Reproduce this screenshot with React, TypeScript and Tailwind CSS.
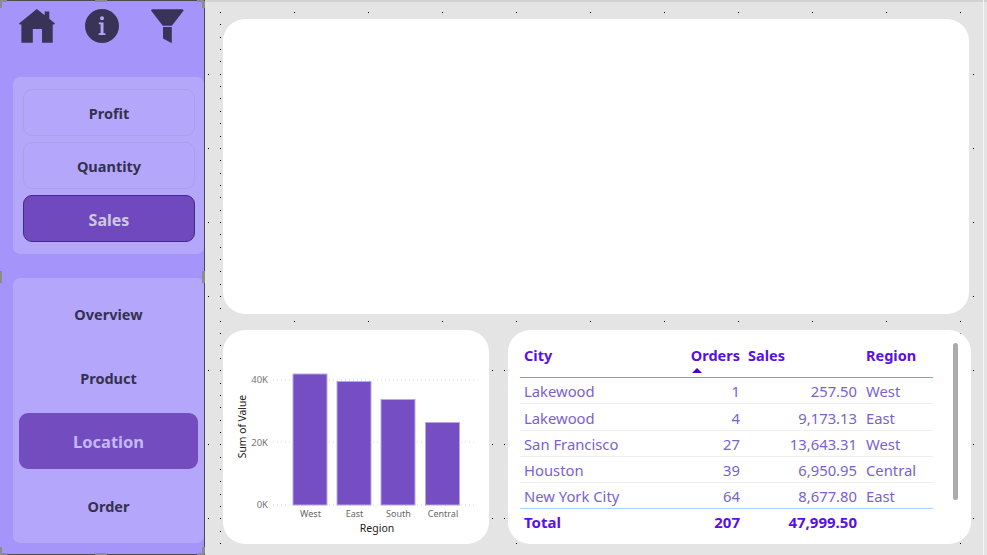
import React from 'react';

const font = { fontFamily: '"Noto Sans", "Open Sans", sans-serif' };

const rows = [
  { city: 'Lakewood', orders: '1', sales: '257.50', region: 'West' },
  { city: 'Lakewood', orders: '4', sales: '9,173.13', region: 'East' },
  { city: 'San Francisco', orders: '27', sales: '13,643.31', region: 'West' },
  { city: 'Houston', orders: '39', sales: '6,950.95', region: 'Central' },
  { city: 'New York City', orders: '64', sales: '8,677.80', region: 'East' },
];

const bars = [
  { label: 'West', x: 70, top: 44 },
  { label: 'East', x: 114, top: 51.5 },
  { label: 'South', x: 158, top: 69.5 },
  { label: 'Central', x: 202.5, top: 92.5 },
];

// canvas grid dots of the report editor
function gridDots() {
  const dots: [number, number][] = [];
  for (let k = 0; k < 44; k++) dots.push([220, Math.round(12 + 12.35 * k)]);
  for (let k = 1; k <= 10; k++) {
    dots.push([220 + 74 * k, 12]);
    dots.push([220 + 74 * k, 321]);
  }
  for (let k = 1; k <= 7; k++) {
    dots.push([208, 74 * k]);
    dots.push([973, 74 * k]);
  }
  [370, 444, 518].forEach((y) => {
    dots.push([492, y]);
    dots.push([504, y]);
  });
  dots.push([516, 543], [960, 543], [960, 333]);
  return dots;
}

function HomeIcon() {
  return (
    <svg width="36" height="34" viewBox="19 9 36 34" className="shrink-0">
      <path
        fill="#3a3358"
        d="M36.8 9 44.7 15.2V11.4H49.3V18.8L55 23.6 54.2 24.4H52.7V42.7H42V29H32.8V42.7H21.4V24.4H19.8L19 23.6Z"
      />
    </svg>
  );
}

function InfoIcon() {
  return (
    <svg width="34" height="34" viewBox="85 9 34 34" className="shrink-0">
      <circle cx="102" cy="26" r="17" fill="#3a3358" />
      <circle cx="102" cy="18.2" r="2" fill="#b3a6f5" />
      <path fill="#b3a6f5" d="M98.8 22.6H103.5V33.2H105.4V35H98.6V33.2H100.6V24.2H98.8Z" />
    </svg>
  );
}

function FilterIcon() {
  return (
    <svg width="33" height="34" viewBox="151 9 33 34" className="shrink-0">
      <path fill="#3a3358" d="M152 9.3H182.6L183.7 10.6 171.8 25.8H162.8L151 10.6Z" />
      <path fill="#3a3358" d="M163 27H171.8V43.2L163 38.4Z" />
    </svg>
  );
}

function ToggleButton({ label, active }: { label: string; active?: boolean }) {
  return (
    <div
      className={
        active
          ? 'h-[47px] pt-[2px] rounded-[9px] border border-[#40306f] bg-[#7149bf] flex items-center justify-center text-[16px] font-bold text-[#cfc9de]'
          : 'h-[47px] pt-[2px] rounded-[9px] border border-[#ab9fe8] bg-[#b4a7fb] flex items-center justify-center text-[14.5px] font-bold text-[#35304f]'
      }
    >
      {label}
    </div>
  );
}

function NavItem({ label, active }: { label: string; active?: boolean }) {
  return (
    <div
      className={
        active
          ? 'h-[56px] pt-[2px] rounded-[9px] bg-[#734dbf] flex items-center justify-center text-[16.5px] font-bold text-[#c5b8fb]'
          : 'h-[56px] pt-[4px] flex items-center justify-center text-[14.5px] font-bold text-[#35304f]'
      }
    >
      {label}
    </div>
  );
}

function Handle({ className }: { className: string }) {
  return <div className={'absolute bg-[#8c8c8c] ' + className} />;
}

function Sidebar() {
  return (
    <aside className="relative w-[205px] h-[555px] shrink-0 bg-[#a594f9] border-t border-b border-r border-[#4a4a4f] pt-[8px]">
      <div className="flex pl-[19px]">
        <HomeIcon />
        <div className="ml-[30px]">
          <InfoIcon />
        </div>
        <div className="ml-[32px]">
          <FilterIcon />
        </div>
      </div>
      <div className="mt-[34px] ml-[13px] h-[177px] rounded-[7px] bg-[#b4a7fb] pt-[12px] pl-[10px] pr-[9px] flex flex-col gap-[6px]">
        <ToggleButton label="Profit" />
        <ToggleButton label="Quantity" />
        <ToggleButton label="Sales" active />
      </div>
      <div className="mt-[24px] ml-[13px] h-[265px] rounded-[7px] bg-[#b4a7fb] pt-[7px] pl-[6px] pr-[6px] flex flex-col gap-[8px]">
        <NavItem label="Overview" />
        <NavItem label="Product" />
        <NavItem label="Location" active />
        <NavItem label="Order" />
      </div>
      <Handle className="left-0 -top-[1px] w-[7px] h-[2px]" />
      <Handle className="left-0 top-0 w-[2px] h-[7px]" />
      <Handle className="left-[95px] -top-[1px] w-[12px] h-[2px]" />
      <Handle className="right-0 -top-[1px] w-[7px] h-[2px]" />
      <Handle className="-right-[1px] top-0 w-[3px] h-[7px]" />
      <Handle className="-right-[1px] top-[270px] w-[3px] h-[12px]" />
      <Handle className="left-0 top-[270px] w-[2px] h-[12px]" />
      <Handle className="left-0 bottom-0 w-[2px] h-[7px]" />
      <Handle className="left-0 -bottom-[1px] w-[7px] h-[2px]" />
      <Handle className="left-[95px] -bottom-[1px] w-[12px] h-[2px]" />
      <Handle className="right-0 -bottom-[1px] w-[7px] h-[2px]" />
      <Handle className="-right-[1px] bottom-0 w-[3px] h-[7px]" />
    </aside>
  );
}

function RegionChart() {
  return (
    <div className="w-[266px] h-[214px] rounded-[22px] bg-white overflow-hidden">
      <svg width="266" height="214" viewBox="0 0 266 214" style={{ fontFamily: font.fontFamily }}>
        {[50, 112, 175].map((y) => (
          <line key={y} x1="50" x2="254" y1={y} y2={y} stroke="#d4d4d4" strokeDasharray="1 3" />
        ))}
        {bars.map((b) => (
          <rect key={b.label} x={b.x} y={b.top} width="34" height={175 - b.top} fill="#744ec2" stroke="#b9a6ea" strokeWidth="1" />
        ))}
        {[
          ['40K', 49],
          ['20K', 112],
          ['0K', 174],
        ].map(([t, y]) => (
          <text key={t} x="45" y={Number(y) + 4} textAnchor="end" fontSize="9.5" fill="#777777">
            {t}
          </text>
        ))}
        {bars.map((b) => (
          <text key={b.label} x={b.x + 17.5} y="187" textAnchor="middle" fontSize="9" fill="#666666">
            {b.label}
          </text>
        ))}
        <text x="154" y="202" textAnchor="middle" fontSize="10.5" fill="#222222">
          Region
        </text>
        <text transform="translate(22.5 96.5) rotate(-90)" textAnchor="middle" fontSize="10.3" fill="#222222">
          Sum of Value
        </text>
      </svg>
    </div>
  );
}

const cols = 'grid grid-cols-[167px_57px_117px_72px] w-[413px] items-center';

function OrdersTable() {
  return (
    <div className="relative w-[463px] h-[214px] rounded-[22px] bg-white pl-[12px] pt-[16px]">
      <div className={cols + ' h-[32px] border-b border-[#5caaff] text-[14.5px] font-bold text-[#5a0fe6] items-start'}>
        <div className="pl-[4px] leading-[19px]">City</div>
        <div className="relative text-right pr-[4px] leading-[19px]">
          Orders
          <svg width="10" height="5" viewBox="0 0 10 5" className="absolute left-[5px] top-[22px]">
            <path d="M5 0 10 5H0Z" fill="#4a00d4" />
          </svg>
        </div>
        <div className="pl-[4px] leading-[19px]">Sales</div>
        <div className="pl-[5px] leading-[19px]">Region</div>
      </div>
      {rows.map((r, i) => (
        <div
          key={i}
          className={
            cols +
            ' pt-[2px] text-[14.8px] font-normal text-[#7a5fd0] ' +
            (i === 1 ? 'h-[27px] ' : 'h-[26px] ') +
            (i < rows.length - 1 ? 'border-b border-[#eeeeee]' : 'border-b border-[#a5d2ff]')
          }
        >
          <div className="pl-[4px]">{r.city}</div>
          <div className="text-right pr-[4px]">{r.orders}</div>
          <div className="text-right pr-[4px]">{r.sales}</div>
          <div className="pl-[5px]">{r.region}</div>
        </div>
      ))}
      <div className={cols + ' h-[27px] text-[15px] font-bold text-[#5a0fe6]'}>
        <div className="pl-[4px]">Total</div>
        <div className="text-right pr-[4px]">207</div>
        <div className="text-right pr-[4px]">47,999.50</div>
        <div />
      </div>
      <div className="absolute left-[445px] top-[13px] w-[5px] h-[157px] rounded-full bg-[#ababab]" />
    </div>
  );
}

export default function App() {
  return (
    <div className="relative flex w-[987px] h-[555px] overflow-hidden bg-[#e4e4e4]" style={font}>
      <svg width="987" height="555" className="absolute left-0 top-0">
        {gridDots().map(([x, y]) => (
          <rect key={x + '-' + y} x={x} y={y} width="1" height="1" fill="#000000" />
        ))}
      </svg>
      <Sidebar />
      <main className="relative flex-1 pl-[18px] pt-[19px]">
        <div className="absolute left-0 top-0 w-full h-[2px] bg-[#d2d2d2]" />
        <div className="absolute right-[3px] top-0 w-[1px] h-full bg-[#f6f6f6]" />
        <div className="w-[746px] h-[295px] rounded-[22px] bg-white" />
        <div className="mt-[16px] flex gap-[19px]">
          <RegionChart />
          <OrdersTable />
        </div>
      </main>
    </div>
  );
}
